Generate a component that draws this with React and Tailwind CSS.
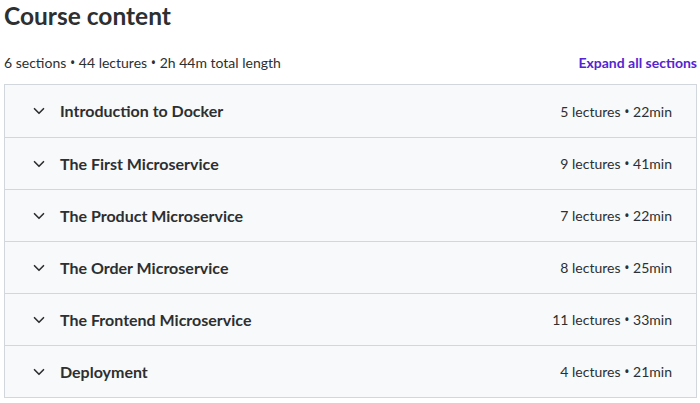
import React from 'react';
import { ChevronDown } from 'lucide-react';

const sections = [
  { title: 'Introduction to Docker', lectures: 5, length: '22min' },
  { title: 'The First Microservice', lectures: 9, length: '41min' },
  { title: 'The Product Microservice', lectures: 7, length: '22min' },
  { title: 'The Order Microservice', lectures: 8, length: '25min' },
  { title: 'The Frontend Microservice', lectures: 11, length: '33min' },
  { title: 'Deployment', lectures: 4, length: '21min' },
];

const Dot = () => <span className="font-['Noto_Sans']"> • </span>;

export default function App() {
  return (
    <div className="bg-white pl-[4px] pr-[3px] text-[#2d2f31]" style={{ fontFamily: 'Lato, "Noto Sans", sans-serif' }}>
      <h2 className="text-[24.5px] font-bold leading-[32px]">Course content</h2>
      <div className="flex items-end justify-between mt-[20px] mb-[10px]">
        <span className="text-[14px] leading-[22px]">
          6 sections<Dot />44 lectures<Dot />2h 44m total length
        </span>
        <button className="text-[14px] font-bold leading-[22px] text-[#5624d0]">Expand all sections</button>
      </div>
      <div className="border border-[#d1d7dc]">
        {sections.map((s, i) => (
          <div
            key={s.title}
            className={`flex items-center justify-between h-[52px] bg-[#f7f9fa] pl-[25px] pr-[24px] ${i > 0 ? 'border-t border-[#d1d7dc]' : ''}`}
          >
            <div className="flex items-center gap-[12px]">
              <ChevronDown size={18} strokeWidth={2.2} className="text-[#2d2f31]" />
              <span className="text-[16px] font-bold">{s.title}</span>
            </div>
            <span className="text-[14px]">
              {s.lectures} lectures<Dot />{s.length}
            </span>
          </div>
        ))}
      </div>
    </div>
  );
}
